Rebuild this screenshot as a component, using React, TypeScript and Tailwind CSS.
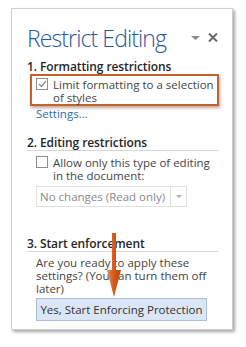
export default function App() {
	return (
		<div className="h-[347px] w-[246px] bg-white pl-[11px] pt-[8px]" style={{ fontFamily: '"Open Sans", sans-serif' }}>
			<div className="relative h-[322px] w-[222px] border border-[#cfcfcf] bg-white pl-[15px] pr-[14px] shadow-[2px_2px_3px_rgba(0,0,0,0.35)]">
				<div className="flex items-start justify-between pt-[13px]">
					<h1 className="text-[23px] font-light leading-[32px] tracking-[-0.9px] text-[#2b579a]">Restrict Editing</h1>
					<div className="flex items-center gap-[8px] pt-[11px]">
						<svg width="9" height="4" viewBox="0 0 9 4">
							<path d="M0 0h9L4.5 4z" fill="#8a8a8a" />
						</svg>
						<svg width="10" height="9" viewBox="0 0 10 9">
							<path d="M1 0.5l8 8M9 0.5l-8 8" stroke="#6a6a6a" strokeWidth="2" />
						</svg>
					</div>
				</div>

				<h2 className="mt-[5px] text-[12px] font-semibold leading-[15px] tracking-[-0.1px] text-[#262626]">1. Formatting restrictions</h2>
				<div className="ml-[3px] flex h-[32px] w-[189px] items-start gap-[5px] border-2 border-[#c2622e] pl-[4px] pt-[2px] shadow-[1px_2px_3px_rgba(120,60,20,0.45)]">
					<Checkbox checked />
					<span className="text-[11.5px] leading-[13px] text-[#444]">Limit formatting to a selection of styles</span>
				</div>
				<a className="ml-[9px] block text-[11.5px] leading-[15px] text-[#2e6bb5]">Settings...</a>

				<h2 className="mt-[14px] border-b border-[#d6d6d6] text-[12px] font-semibold leading-[15px] tracking-[-0.1px] text-[#262626]">2. Editing restrictions</h2>
				<div className="ml-[9px] mt-[5px] flex items-start gap-[5px]">
					<Checkbox />
					<span className="text-[11.5px] leading-[13px] text-[#444]">Allow only this type of editing in the document:</span>
				</div>
				<div className="ml-[9px] mt-[4px] flex h-[21px] w-[151px] items-center border border-[#e0e0e0] text-[11.5px] text-[#8a8a8a]">
					<span className="flex-1 pl-[3px]">No changes (Read only)</span>
					<span className="flex h-full w-[16px] items-center justify-center border-l border-[#e0e0e0]">
						<svg width="6" height="3" viewBox="0 0 6 3">
							<path d="M0 0h6L3 3z" fill="#b0b0b0" />
						</svg>
					</span>
				</div>

				<h2 className="mt-[29px] border-b border-[#d6d6d6] text-[12px] font-semibold leading-[15px] tracking-[-0.1px] text-[#262626]">3. Start enforcement</h2>
				<p className="ml-[9px] mt-[4px] text-[11.5px] leading-[13px] text-[#444]">Are you ready to apply these settings? (You can turn them off later)</p>
				<button className="ml-[9px] mt-[3px] h-[23px] w-[171px] whitespace-nowrap border border-[#a9c1de] bg-[#dae6f5] text-[11.5px] text-[#333]">Yes, Start Enforcing Protection</button>

				<svg className="absolute left-[94px] top-[224px]" width="16" height="65" viewBox="0 0 16 65">
					<defs>
						<linearGradient id="ag" x1="0" y1="0" x2="1" y2="0">
							<stop offset="0" stopColor="#f08a4a" />
							<stop offset="0.5" stopColor="#d4581a" />
							<stop offset="1" stopColor="#b8470f" />
						</linearGradient>
					</defs>
					<path d="M6 0h4v37h5L8 64 1 37h5z" fill="url(#ag)" />
				</svg>
			</div>
		</div>
	);
}

function Checkbox({ checked }: { checked?: boolean }) {
	return (
		<span className="flex h-[12px] w-[12px] shrink-0 items-center justify-center border border-[#8f8f8f] bg-white">
			{checked && (
				<svg width="9" height="8" viewBox="0 0 9 8">
					<path d="M1 4l2.5 2.5L8 1" stroke="#8a8a8a" strokeWidth="1.2" fill="none" />
				</svg>
			)}
		</span>
	);
}
